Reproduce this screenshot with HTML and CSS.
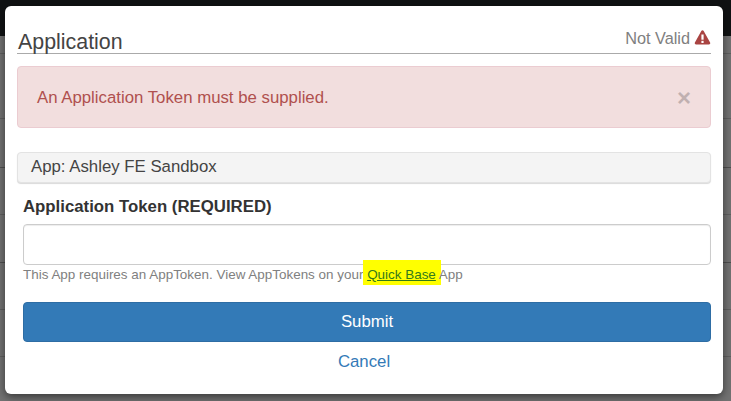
FILE: index.html
```html
<!DOCTYPE html>
<html lang="en">
<head>
<meta charset="utf-8">
<title>Application</title>
<link rel="stylesheet" href="styles.css">
</head>
<body>
<div class="backdrop">
  <div class="topbar"></div>
  <div class="rows">
    <div class="row r1"></div><div class="row r2"></div><div class="row r3"></div><div class="row r4"></div>
    <div class="row r5"></div><div class="row r6"></div><div class="row r7"></div><div class="row r8"></div>
  </div>
</div>
<main class="modal">
  <header class="head">
    <h1 class="title">Application</h1>
    <div class="status">Not Valid
      <svg class="warn" viewBox="0 0 16 15" width="17" height="15" aria-hidden="true">
        <path fill="#a94442" d="M8 .3c.5 0 .9.3 1.2.7l6.400 11.600c.5.9-.1 2-1.200 2H1.600c-1.100 0-1.700-1.100-1.200-2L6.800 1C7.100.6 7.500.3 8 .3z"/>
        <rect x="6.900" y="4.500" width="2.200" height="5.200" fill="#fff"/>
        <rect x="6.900" y="10.800" width="2.200" height="2.200" fill="#fff"/>
      </svg>
    </div>
  </header>
  <div class="alert">
    <span>An Application Token must be supplied.</span>
    <span class="close">×</span>
  </div>
  <div class="panel">App: Ashley FE Sandbox</div>
  <form class="form">
    <label class="label" for="token">Application Token (REQUIRED)</label>
    <input class="input" id="token" type="text">
    <p class="help">This App requires an AppToken. View AppTokens on your <a class="mark" href="#">Quick Base</a> App</p>
    <button class="submit" type="button">Submit</button>
    <a class="cancel" href="#">Cancel</a>
  </form>
</main>
</body>
</html>
```
FILE: styles.css
```css
* { box-sizing: border-box; }
html, body { margin: 0; height: 100%; overflow: hidden; }
body { width: 731px; height: 401px; background: #6e6e6e; font-family: "Liberation Sans", Arial, sans-serif; color: #333; position: relative; }
.backdrop { display: flex; flex-direction: column; height: 401px; }
.topbar { height: 36px; flex: none; background: #101213; }
.rows { flex: 1; display: flex; flex-direction: column; background: #727272; }
.row { flex: none; height: 47px; border-bottom: 1px solid #5f5f5f; }
.r1 { height: 18px; }
.r2 { height: 65px; }
.r3 { height: 49px; border-bottom-color: #4f4f4f; }
.r4 { height: 47px; }
.r5 { height: 48px; border-bottom-color: #4f4f4f; }
.r6 { height: 47px; }
.r7 { height: 47px; }
.modal { position: absolute; left: 5px; top: 6px; width: 718px; height: 388px; background: #fff; border-radius: 6px; box-shadow: 0 3px 9px rgba(0,0,0,.5); padding: 19px 12px 0 12px; }
.head { display: flex; justify-content: space-between; align-items: flex-end; height: 29px; border-bottom: 1px solid #aaa; }
.title { margin: 0 0 0 1px; font-size: 21.400px; font-weight: 400; line-height: 29px; color: #444; position: relative; top: 4px; }
.status { display: flex; align-items: center; gap: 4px; font-size: 16.300px; line-height: 20px; color: #808080; padding-bottom: 5px; }
.warn { display: block; margin-top: -2px; }
.alert { margin-top: 12px; height: 62px; display: flex; justify-content: space-between; align-items: center; padding: 1px 19px 0; background: #f2dede; border: 1px solid #ebccd1; border-radius: 4px; color: #b0504e; font-size: 16.800px; }
.close { font-size: 24px; font-weight: 700; line-height: 1; color: #000; opacity: .2; }
.panel { margin-top: 24px; height: 31px; padding: 0 13px 2px; display: flex; align-items: center; background: #f4f4f4; border: 1px solid #e3e3e3; border-radius: 4px; box-shadow: 0 1px 1px rgba(0,0,0,.15); font-size: 16.800px; color: #444; }
.form { display: flex; flex-direction: column; padding: 0 0 0 6px; }
.label { margin-top: 14px; font-size: 16.800px; font-weight: 700; line-height: 20px; color: #333; }
.input { margin-top: 7px; height: 41px; width: 100%; border: 1px solid #ccc; border-radius: 4px; background: #fff; box-shadow: inset 0 1px 1px rgba(0,0,0,.075); }
.help { margin: 0; height: 20px; font-size: 13.440px; line-height: 20px; color: #808080; }
.mark { background: #ff0; padding: 7px 5px 3px 4px; margin: 0 -5px 0 -4px; color: #337a1c; text-decoration: underline; }
.submit { margin-top: 17px; height: 40px; width: 100%; background: #337ab7; border: 1px solid #2e6da4; border-radius: 4px; color: #fff; font: 16.800px "Liberation Sans", Arial, sans-serif; }
.cancel { margin-top: 10px; padding-right: 6px; text-align: center; font-size: 16.800px; line-height: 20px; color: #337ab7; text-decoration: none; }
```
